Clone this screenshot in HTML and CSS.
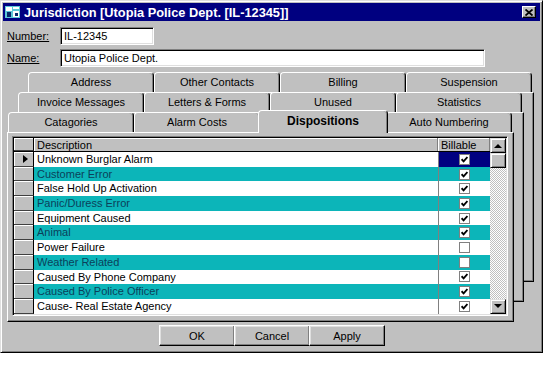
FILE: index.html
```html
<!DOCTYPE html>
<html lang="en">
<head>
    <meta charset="UTF-8">
    <title>Jurisdiction</title>
    <link rel="stylesheet" href="styles.css">
</head>
<body>

    <div class="window">
        <!-- Title bar -->
        <div class="titlebar">
            <svg class="app-icon" width="16" height="14" viewBox="0 0 16 14">
                <rect x="0" y="1" width="15" height="12" fill="#5ec8d8"/>
                <rect x="1" y="2" width="6" height="4" fill="#ffffff"/>
                <rect x="8" y="2" width="6" height="2" fill="#ffffff"/>
                <rect x="2" y="7" width="4" height="5" fill="#0a2a6a"/>
                <rect x="8" y="6" width="6" height="6" fill="#ffffff"/>
                <rect x="10" y="8" width="3" height="3" fill="#0a2a6a"/>
            </svg>
            <span class="title">Jurisdiction [Utopia Police Dept. [IL-12345]]</span>
            <button class="close-btn">
                <svg width="8" height="7" viewBox="0 0 8 7">
                    <path d="M0.5 0.5 L7.5 6.5 M7.5 0.5 L0.5 6.5" stroke="#000" stroke-width="1.8"/>
                </svg>
            </button>
        </div>

        <!-- Header fields -->
        <div class="field-row first">
            <label class="field-label">Number:</label>
            <input class="field number" type="text" value="IL-12345">
        </div>
        <div class="field-row">
            <label class="field-label">Name:</label>
            <input class="field name" type="text" value="Utopia Police Dept.">
        </div>

        <!-- Tab pages, back to front -->
        <div class="tabstack">
            <div class="tablayer back">
                <div class="tabrow">
                    <div class="tab">Address</div>
                    <div class="tab">Other Contacts</div>
                    <div class="tab">Billing</div>
                    <div class="tab">Suspension</div>
                </div>
                <div class="page"></div>
            </div>

            <div class="tablayer mid">
                <div class="tabrow">
                    <div class="tab">Invoice Messages</div>
                    <div class="tab">Letters &amp; Forms</div>
                    <div class="tab">Unused</div>
                    <div class="tab">Statistics</div>
                </div>
                <div class="page"></div>
            </div>

            <div class="tablayer front">
                <div class="tabrow">
                    <div class="tab">Catagories</div>
                    <div class="tab">Alarm Costs</div>
                    <div class="tab active">Dispositions</div>
                    <div class="tab">Auto Numbering</div>
                </div>
                <div class="page">
                    <div class="grid">
                        <div class="grid-body">
                            <div class="grid-head">
                                <div class="ind"></div>
                                <div class="desc">Description</div>
                                <div class="bill">Billable</div>
                            </div>
                            <div id="gridRows"></div>
                        </div>
                        <div class="scrollbar">
                            <div class="sb-btn"><span class="arrow-up"></span></div>
                            <div class="sb-thumb"></div>
                            <div class="sb-track"></div>
                            <div class="sb-btn"><span class="arrow-down"></span></div>
                        </div>
                    </div>
                </div>
            </div>
        </div>

        <!-- Dialog buttons -->
        <div class="buttons">
            <button class="btn">OK</button>
            <button class="btn">Cancel</button>
            <button class="btn">Apply</button>
        </div>
    </div>

    <script>
        const dispositions = [
            { text: "Unknown Burglar Alarm", billable: true },
            { text: "Customer Error", billable: true },
            { text: "False Hold Up Activation", billable: true },
            { text: "Panic/Duress Error", billable: true },
            { text: "Equipment Caused", billable: true },
            { text: "Animal", billable: true },
            { text: "Power Failure", billable: false },
            { text: "Weather Related", billable: false },
            { text: "Caused By Phone Company", billable: true },
            { text: "Caused By Police Officer", billable: true },
            { text: "Cause- Real Estate Agency", billable: true }
        ];

        const checkSvg = '<svg width="7" height="7" viewBox="0 0 7 7"><path d="M0.6 3.2 L2.6 5.4 L6.4 1" fill="none" stroke="#000" stroke-width="1.8"/></svg>';

        // Fill the grid rows
        function renderRows() {
            const body = document.getElementById("gridRows");
            dispositions.forEach((row, i) => {
                const div = document.createElement("div");
                div.className = "grid-row" + (i % 2 ? " alt" : "") + (i === 0 ? " current" : "");
                div.innerHTML = `
                    <div class="ind">${i === 0 ? '<span class="pointer"></span>' : ''}</div>
                    <div class="desc">${row.text}</div>
                    <div class="bill"><span class="chk">${row.billable ? checkSvg : ''}</span></div>
                `;
                body.appendChild(div);
            });
        }

        window.onload = renderRows;
    </script>
</body>
</html>
```

FILE: styles.css
```css
* {
    box-sizing: border-box;
}
body {
    margin: 0;
    background-color: #fff;
    font-family: "Liberation Sans", Arial, sans-serif;
    font-size: 11px;
    color: #000;
}
.window {
    width: 543px;
    height: 353px;
    background-color: #c0c0c0;
    border: 1px solid;
    border-color: #dfdfdf #000 #000 #dfdfdf;
    box-shadow: inset 1px 1px #fff, inset -1px -1px #808080;
    padding: 2px;
    display: flex;
    flex-direction: column;
}
.titlebar {
    height: 18px;
    background-color: #000080;
    color: #fff;
    display: flex;
    align-items: center;
    padding: 0 4px 0 2px;
}
.app-icon {
    flex-shrink: 0;
}
.title {
    margin-left: 3px;
    font-weight: bold;
    font-size: 12.8px;
    white-space: nowrap;
}
.close-btn {
    margin-left: auto;
    width: 14px;
    height: 12px;
    padding: 0;
    background-color: #c0c0c0;
    border: 1px solid;
    border-color: #fff #000 #000 #fff;
    box-shadow: inset -1px -1px #808080;
    display: flex;
    align-items: center;
    justify-content: center;
}

/* header fields */
.field-row {
    display: flex;
    align-items: center;
    height: 18px;
    padding-left: 4px;
    margin-top: 4px;
}
.field-row.first {
    margin-top: 6px;
}
.field-label {
    width: 53px;
    text-decoration: underline;
}
.field {
    height: 18px;
    border: 1px solid;
    border-color: #808080 #fff #fff #808080;
    box-shadow: inset 1px 1px #000, inset -1px -1px #dfdfdf;
    padding: 0 3px;
    font-family: "Liberation Sans", Arial, sans-serif;
    font-size: 11px;
    background-color: #fff;
    outline: none;
}
.field.number {
    width: 94px;
}
.field.name {
    width: 425px;
}

/* stacked tab pages */
.tabstack {
    display: grid;
    margin: 5px 0 0 4px;
}
.tablayer {
    grid-area: 1 / 1;
    width: 507px;
    display: flex;
    flex-direction: column;
}
.tablayer.back {
    margin-left: 20px;
}
.tablayer.mid {
    margin-left: 10px;
    margin-top: 20px;
}
.tablayer.front {
    margin-top: 40px;
}
.tabrow {
    height: 20px;
    display: flex;
    align-items: flex-end;
    padding-left: 1px;
}
.tab {
    width: 126px;
    height: 20px;
    border: 1px solid;
    border-bottom: none;
    border-color: #fff #000 #000 #fff;
    border-radius: 4px 4px 0 0;
    box-shadow: inset -1px 0 #808080;
    background-color: #c0c0c0;
    text-align: center;
    line-height: 18px;
}
.tab.active {
    width: 130px;
    height: 23px;
    margin: 0 -2px -1px;
    position: relative;
    z-index: 1;
    font-weight: bold;
    font-size: 12px;
    line-height: 20px;
}
.page {
    height: 190px;
    background-color: #c0c0c0;
    border: 1px solid;
    border-color: #fff #000 #000 #fff;
    box-shadow: inset -1px -1px #808080;
    padding: 3px 5px 0 4px;
}

/* data grid */
.grid {
    display: flex;
    border: 1px solid;
    border-color: #808080 #fff #fff #808080;
    box-shadow: inset 1px 1px #000, inset -1px -1px #dfdfdf;
    padding: 1px;
    background-color: #fff;
}
.grid-body {
    flex: 1;
}
.grid-head, .grid-row {
    display: flex;
}
.grid-head {
    height: 14px;
    background-color: #c0c0c0;
    border-bottom: 1px solid #000;
}
.grid-row {
    height: 14.7px;
    background-color: #fff;
}
.grid-row.alt {
    background-color: #0cb5b9;
    color: #0b3f5a;
}
.ind {
    width: 20px;
    flex-shrink: 0;
    background-color: #c0c0c0;
    border-right: 1px solid #000;
    border-bottom: 1px solid #404040;
    box-shadow: inset 1px 1px #fff;
    display: flex;
    align-items: center;
    justify-content: center;
}
.desc {
    flex: 1;
    padding-left: 3px;
    line-height: 14px;
    white-space: nowrap;
}
.bill {
    width: 52px;
    flex-shrink: 0;
    border-left: 1px solid #808080;
    display: flex;
    align-items: center;
    justify-content: center;
}
.grid-head .desc, .grid-head .bill {
    border-right: 1px solid #808080;
    box-shadow: inset 1px 1px #fff;
}
.grid-head .bill {
    justify-content: flex-start;
    padding-left: 3px;
    border-left: none;
}
.grid-row.current .bill {
    background-color: #000080;
}
.pointer {
    width: 0;
    height: 0;
    border-top: 4px solid transparent;
    border-bottom: 4px solid transparent;
    border-left: 5px solid #000;
    margin-left: 3px;
}
.chk {
    width: 11px;
    height: 11px;
    border: 1px solid #808080;
    background-color: #fff;
    display: flex;
    align-items: center;
    justify-content: center;
}

/* scrollbar */
.scrollbar {
    width: 16px;
    display: flex;
    flex-direction: column;
}
.sb-btn, .sb-thumb {
    height: 15px;
    background-color: #c0c0c0;
    border: 1px solid;
    border-color: #dfdfdf #000 #000 #dfdfdf;
    box-shadow: inset 1px 1px #fff, inset -1px -1px #808080;
    display: flex;
    align-items: center;
    justify-content: center;
}
.sb-track {
    flex: 1;
    background-color: #e4e4e4;
    background-image: repeating-conic-gradient(#fff 0 25%, #c0c0c0 0 50%);
    background-size: 2px 2px;
}
.arrow-up, .arrow-down {
    width: 0;
    height: 0;
    border-left: 4px solid transparent;
    border-right: 4px solid transparent;
}
.arrow-up {
    border-bottom: 4px solid #000;
}
.arrow-down {
    border-top: 4px solid #000;
}

/* dialog buttons */
.buttons {
    display: flex;
    justify-content: center;
    margin-top: 3px;
    padding-left: 1px;
}
.btn {
    width: 76px;
    height: 21px;
    background-color: #c0c0c0;
    border: 1px solid;
    border-color: #fff #000 #000 #fff;
    box-shadow: inset -1px -1px #808080, inset 1px 1px #dfdfdf;
    font-family: "Liberation Sans", Arial, sans-serif;
    font-size: 11px;
    padding: 0;
}
.btn + .btn {
    margin-left: -1px;
}
```
